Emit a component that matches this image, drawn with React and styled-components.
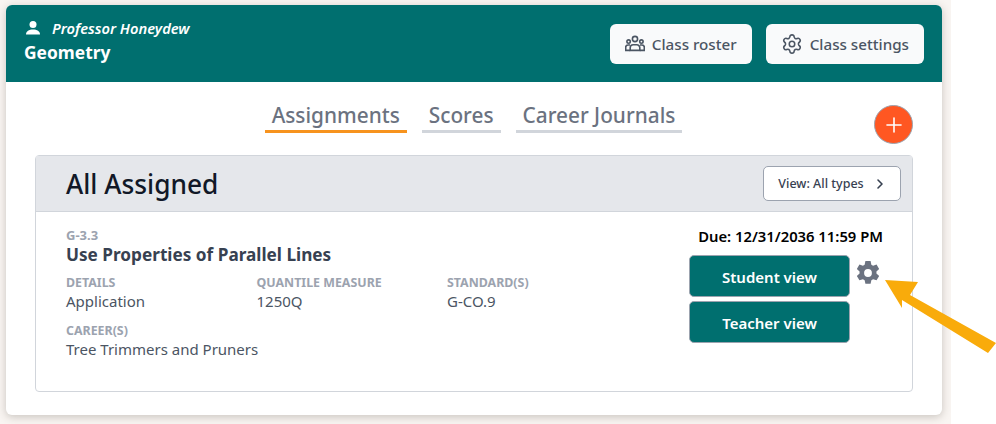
import React from 'react';
import styled, { createGlobalStyle } from 'styled-components';
import { ChevronRight, Plus, Settings } from 'lucide-react';

const GlobalStyle = createGlobalStyle`
  html, body {
    margin: 0;
    background: #fff;
  }
  * {
    box-sizing: border-box;
  }
`;

const details = [
  { label: 'DETAILS', value: 'Application' },
  { label: 'QUANTILE MEASURE', value: '1250Q' },
  { label: 'STANDARD(S)', value: 'G-CO.9' }
];

const tabs = [
  { name: 'Assignments', active: true },
  { name: 'Scores' },
  { name: 'Career Journals' }
];

const RosterIcon = () => (
  <svg width="20" height="20" viewBox="0 0 20 20" fill="none" stroke="currentColor" strokeWidth="1.6">
    <circle cx="10" cy="5" r="2.6" />
    <circle cx="3.6" cy="7.6" r="1.7" />
    <circle cx="16.4" cy="7.6" r="1.7" />
    <path d="M5.2 16.4v-2.6a3 3 0 0 1 3-3h3.6a3 3 0 0 1 3 3v2.6z" />
    <path d="M5 11H3a2.3 2.3 0 0 0-2.3 2.3v3.1h4.5" />
    <path d="M15 11h2a2.3 2.3 0 0 1 2.3 2.3v3.1h-4.5" />
  </svg>
);

const GearSolid = () => (
  <svg width="26" height="26" viewBox="0 0 24 24">
    <path
      fill="#6b7280"
      fillRule="evenodd"
      d="M9.6 1h4.8l.7 3.3 1.6.9 3.2-1 2.4 4.1-2.5 2.3v1.800l2.500 2.300-2.400 4.100-3.200-1-1.600.9-.7 3.300H9.600l-.7-3.300-1.600-.9-3.200 1-2.400-4.100 2.500-2.300v-1.800L1.700 8.300l2.400-4.100 3.200 1 1.600-.9zM12 8.400a3.600 3.600 0 1 0 0 7.200 3.600 3.600 0 0 0 0-7.200z"
    />
  </svg>
);

const App = () => {
  return (
    <Page>
      <GlobalStyle />
      <Card>
        <Header>
          <HeaderText>
            <Teacher>
              <svg width="16" height="16" viewBox="0 0 16 16" fill="#fff">
                <circle cx="8" cy="4.500" r="3.500" />
                <path d="M1 14.500c0-3.300 3-5 7-5s7 1.700 7 5z" />
              </svg>
              Professor Honeydew
            </Teacher>
            <ClassName>Geometry</ClassName>
          </HeaderText>
          <HeaderButtons>
            <HeaderButton>
              <RosterIcon />
              Class roster
            </HeaderButton>
            <HeaderButton>
              <Settings size={22} strokeWidth={1.7} />
              Class settings
            </HeaderButton>
          </HeaderButtons>
        </Header>

        <Body>
          <TabRow>
            <Tabs>
              {tabs.map(tab => (
                <Tab key={tab.name} $active={tab.active}>{tab.name}</Tab>
              ))}
            </Tabs>
            <AddButton aria-label="Add">
              <Plus size={24} strokeWidth={1.6} />
            </AddButton>
          </TabRow>

          <Panel>
            <PanelHeader>
              <PanelTitle>All Assigned</PanelTitle>
              <ViewButton>
                View: All types
                <ChevronRight size={16} strokeWidth={2.4} />
              </ViewButton>
            </PanelHeader>
            <Assignment>
              <Info>
                <Code>G-3.3</Code>
                <Title>Use Properties of Parallel Lines</Title>
                <DetailGrid>
                  {details.map(item => (
                    <div key={item.label}>
                      <Label>{item.label}</Label>
                      <Value>{item.value}</Value>
                    </div>
                  ))}
                </DetailGrid>
                <Label>CAREER(S)</Label>
                <Value>Tree Trimmers and Pruners</Value>
              </Info>
              <Actions>
                <Due>Due: 12/31/2036 11:59 PM</Due>
                <ActionRow>
                  <ActionColumn>
                    <ViewLink>Student view</ViewLink>
                    <ViewLink>Teacher view</ViewLink>
                  </ActionColumn>
                  <GearWrap>
                    <GearSolid />
                  </GearWrap>
                </ActionRow>
              </Actions>
            </Assignment>
          </Panel>
        </Body>
      </Card>

      <Arrow width="112" height="76" viewBox="0 0 112 76">
        <path fill="#f9ab0b" d="M1 1 L34 3 L26 16 L112 64 L104 74 L18 21 L18 29 Z" />
      </Arrow>
    </Page>
  );
};

export default App;

const Page = styled.div`
  position: relative;
  width: 951px;
  height: 424px;
  padding: 5px 9px 9px 6px;
  background: #f9f5f2;
  font-family: "Noto Sans", "Open Sans", sans-serif;
`;

const Card = styled.div`
  width: 936px;
  height: 410px;
  border-radius: 6px;
  background: #fff;
  box-shadow: 0 2px 8px rgba(60, 50, 40, 0.25);
  overflow: hidden;
`;

const Header = styled.header`
  height: 77px;
  padding: 0 18px;
  display: flex;
  align-items: center;
  justify-content: space-between;
  background: #006f6f;
  color: #fff;
`;

const HeaderText = styled.div`
  display: flex;
  flex-direction: column;
  padding-bottom: 7px;
`;

const Teacher = styled.div`
  display: flex;
  align-items: center;
  gap: 11px;
  padding-left: 1px;
  font-size: 14.7px;
  font-weight: 600;
  font-style: italic;
  line-height: 20px;
`;

const ClassName = styled.div`
  margin-top: 3px;
  font-size: 17.4px;
  font-weight: 700;
  line-height: 22px;
`;

const HeaderButtons = styled.div`
  display: flex;
  gap: 14px;
  margin-top: 1px;
`;

const HeaderButton = styled.button`
  height: 40px;
  padding: 0 15px;
  display: flex;
  align-items: center;
  gap: 7px;
  border: none;
  border-radius: 6px;
  background: #f9fafb;
  color: #4b5563;
  font-family: inherit;
  font-size: 15.2px;
  font-weight: 500;
`;

const Body = styled.div`
  padding: 0 29px;
`;

const TabRow = styled.div`
  position: relative;
  height: 73px;
  display: flex;
  justify-content: center;
`;

const Tabs = styled.nav`
  display: flex;
  gap: 15px;
  height: 51px;
  padding-top: 18px;
  margin-right: 1px;
`;

const Tab = styled.div`
  padding: 0 7px;
  border-bottom: 3px solid ${props => (props.$active ? '#f7931e' : '#d1d5db')};
  color: #6b7280;
  font-size: 20.8px;
  font-weight: 500;
  line-height: 30px;
`;

const AddButton = styled.button`
  position: absolute;
  top: 23px;
  right: 0;
  width: 39px;
  height: 39px;
  padding: 0;
  display: flex;
  align-items: center;
  justify-content: center;
  border: 1px solid #9ca3af;
  border-radius: 50%;
  background: #ff5722;
  color: #fff;
`;

const Panel = styled.section`
  width: 878px;
  height: 237px;
  border: 1px solid #d1d5db;
  border-radius: 4px;
`;

const PanelHeader = styled.div`
  height: 56px;
  padding: 0 11px 0 30px;
  display: flex;
  align-items: center;
  justify-content: space-between;
  background: #e5e7eb;
  border-bottom: 1px solid #d1d5db;
`;

const PanelTitle = styled.h2`
  margin: 0;
  color: #111827;
  font-size: 26.3px;
  font-weight: 500;
`;

const ViewButton = styled.button`
  width: 138px;
  height: 35px;
  padding: 0 0 0 2px;
  display: flex;
  align-items: center;
  justify-content: center;
  gap: 8px;
  border: 1px solid #9ca3af;
  border-radius: 5px;
  background: #fff;
  color: #374151;
  font-family: inherit;
  font-size: 12.5px;
  font-weight: 500;
`;

const Assignment = styled.div`
  display: flex;
  justify-content: space-between;
  padding: 15px 29px 0 30px;
`;

const Info = styled.div`
  width: 570px;
`;

const Code = styled.div`
  color: #9ca3af;
  font-size: 13px;
  font-weight: 700;
  line-height: 16px;
`;

const Title = styled.div`
  margin-top: 1px;
  color: #374151;
  font-size: 17.2px;
  font-weight: 700;
  line-height: 22px;
`;

const DetailGrid = styled.div`
  display: grid;
  grid-template-columns: repeat(3, 190.500px);
  margin: 9px 0 12px;
`;

const Label = styled.div`
  color: #9ca3af;
  font-size: 12.4px;
  font-weight: 700;
  line-height: 16px;
`;

const Value = styled.div`
  color: #4b5563;
  font-size: 15px;
  line-height: 20px;
`;

const Actions = styled.div`
  display: flex;
  flex-direction: column;
  align-items: flex-end;
`;

const Due = styled.div`
  color: #000;
  font-size: 14.8px;
  font-weight: 600;
  line-height: 18px;
  margin-bottom: 10px;
`;

const ActionRow = styled.div`
  display: flex;
  gap: 5px;
  margin-right: 2px;
`;

const ActionColumn = styled.div`
  display: flex;
  flex-direction: column;
  gap: 4px;
`;

const ViewLink = styled.button`
  width: 161px;
  height: 42px;
  padding: 2px 0 0;
  border: 1px solid #9ca3af;
  border-radius: 5px;
  background: #006f6f;
  color: #fff;
  font-family: inherit;
  font-size: 15px;
  font-weight: 600;
`;

const GearWrap = styled.div`
  width: 26px;
  height: 26px;
  margin-top: 5px;
`;

const Arrow = styled.svg`
  position: absolute;
  left: 884px;
  top: 279px;
  overflow: visible;
`;
